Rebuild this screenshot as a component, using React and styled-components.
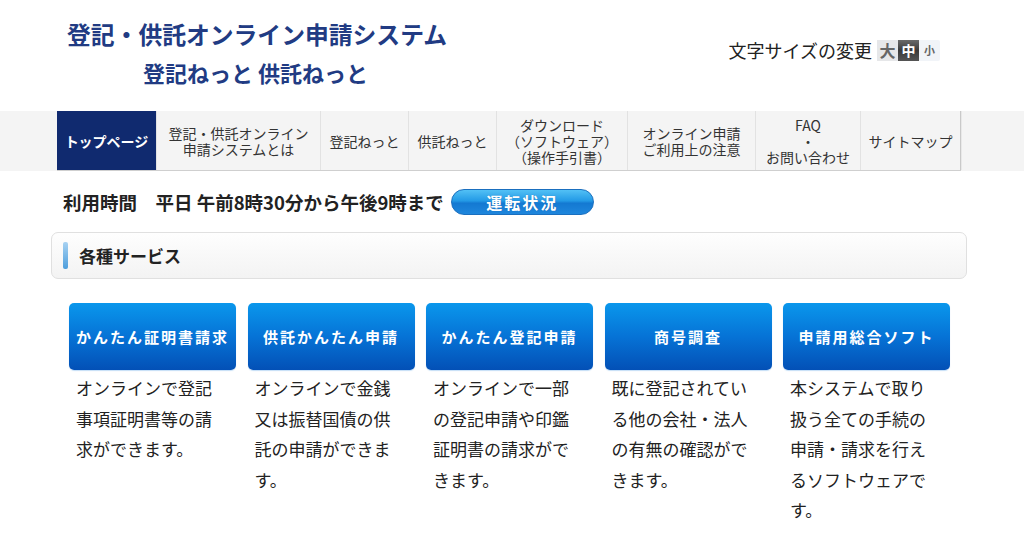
import React from "react";
import styled, { createGlobalStyle } from "styled-components";

const Global = createGlobalStyle`
  html, body { margin: 0; padding: 0; background: #fff; }
  body {
    font-family: "Noto Sans CJK JP", "Noto Sans", sans-serif;
    color: #222;
  }
  * { box-sizing: border-box; }
`;

const Page = styled.div`
  width: 1024px;
  min-height: 546px;
  overflow: hidden;
`;

const Header = styled.header`
  height: 111px;
  display: flex;
  justify-content: space-between;
  align-items: flex-start;
`;

const Brand = styled.div`
  padding-left: 67px;
  padding-top: 17px;
  color: #213b83;
  font-weight: 700;
`;

const Title = styled.div`
  font-size: 23.8px;
  line-height: 34px;
  white-space: nowrap;
`;

const Sub = styled.div`
  font-size: 22px;
  line-height: 30px;
  margin-top: 6px;
  padding-left: 76px;
  white-space: nowrap;
`;

const SizeBox = styled.div`
  display: flex;
  align-items: center;
  margin-top: 39px;
  margin-right: 84px;
  gap: 5px;
`;

const SizeLabel = styled.span`
  font-size: 18px;
  line-height: 22px;
  color: #222;
`;

const SizeButtons = styled.div`
  display: flex;
  background: #f1f4f8;
  border-radius: 2px;
`;

const SizeBtn = styled.span`
  width: 21px;
  height: 21px;
  display: flex;
  align-items: center;
  justify-content: center;
  font-weight: 700;
  font-size: ${(p) => p.$fs}px;
  color: ${(p) => (p.$active ? "#fff" : "#666")};
  background: ${(p) =>
    p.$active
      ? "linear-gradient(#6a6a6a, #3a3a3a 50%, #555)"
      : p.$tint
      ? "#e6e7e9"
      : "transparent"};
`;

const NavBar = styled.nav`
  height: 60px;
  background: #f4f4f4;
`;

const NavList = styled.ul`
  list-style: none;
  margin: 0 0 0 57px;
  padding: 0;
  display: flex;
  height: 60px;
  width: 904px;
  border-bottom: 1px solid #cfcfcf;
`;

const NavItem = styled.li`
  width: ${(p) => p.$w}px;
  height: 59px;
  display: flex;
  align-items: center;
  justify-content: center;
  text-align: center;
  font-size: 14px;
  line-height: 16px;
  color: ${(p) => (p.$active ? "#fff" : "#333")};
  font-weight: ${(p) => (p.$active ? 700 : 400)};
  background: ${(p) => (p.$active ? "#102a6f" : "transparent")};
  border-right: 1px solid ${(p) => (p.$last ? "#c9c9c9" : "#e2e2e2")};
  box-shadow: ${(p) => (p.$last ? "1px 0 0 #e8e8e8" : "none")};
  white-space: nowrap;
`;

const NavLine = styled.div`
  display: block;
`;

const Main = styled.main`
  padding: 18px 0 0 51px;
  width: 967px;
`;

const HoursRow = styled.div`
  display: flex;
  align-items: center;
  gap: 7px;
  padding-left: 12px;
  height: 26px;
`;

const HoursText = styled.span`
  font-size: 18.5px;
  font-weight: 700;
  color: #222;
  white-space: pre;
`;

const StatusBtn = styled.span`
  width: 143px;
  height: 26px;
  border-radius: 13px;
  background: linear-gradient(#52c0f5 0%, #239ae6 45%, #1479d2 55%, #1e86dc 100%);
  border: 1px solid #1a6fbf;
  color: #fff;
  font-weight: 700;
  font-size: 16px;
  letter-spacing: 2px;
  display: flex;
  align-items: center;
  justify-content: center;
  text-shadow: 0 0 1px rgba(0, 50, 120, 0.4);
`;

const SectionHead = styled.div`
  margin-top: 17px;
  height: 47px;
  border: 1px solid #e0e0e0;
  border-radius: 7px;
  background: linear-gradient(#fefefe, #f3f3f3);
  display: flex;
  align-items: center;
  padding-left: 11px;
  gap: 11px;
`;

const Bar = styled.span`
  width: 5px;
  height: 27px;
  border-radius: 2px;
  background: linear-gradient(#a8d2f2, #4d9edc);
`;

const SectionTitle = styled.span`
  font-size: 17px;
  font-weight: 700;
  color: #222;
`;

const Services = styled.div`
  display: grid;
  grid-template-columns: repeat(5, 167px);
  column-gap: 11.5px;
  padding: 24px 0 0 18px;
`;

const Service = styled.div`
  display: flex;
  flex-direction: column;
`;

const ServiceBtn = styled.div`
  height: 67px;
  border-radius: 5px;
  background: linear-gradient(#0a97ec 0%, #0673d6 50%, #0350b6 100%);
  box-shadow: 0 1px 1px rgba(90, 160, 230, 0.35);
  color: #fff;
  font-weight: 700;
  font-size: 15px;
  letter-spacing: 2px;
  display: flex;
  align-items: center;
  justify-content: center;
  white-space: nowrap;
`;

const Desc = styled.p`
  margin: 3px 0 0;
  padding: 0 12px 0 7px;
  font-size: 17px;
  line-height: 30.5px;
  color: #222;
`;

const navItems = [
  { w: 100, t: ["トップページ"], active: true },
  { w: 164, t: ["登記・供託オンライン", "申請システムとは"] },
  { w: 88, t: ["登記ねっと"] },
  { w: 88, t: ["供託ねっと"] },
  { w: 131, t: ["ダウンロード", "（ソフトウェア）", "（操作手引書）"] },
  { w: 128, t: ["オンライン申請", "ご利用上の注意"] },
  { w: 105, t: ["FAQ", "・", "お問い合わせ"] },
  { w: 100, t: ["サイトマップ"], last: true },
];

const services = [
  { b: "かんたん証明書請求", d: "オンラインで登記事項証明書等の請求ができます。" },
  { b: "供託かんたん申請", d: "オンラインで金銭又は振替国債の供託の申請ができます。" },
  { b: "かんたん登記申請", d: "オンラインで一部の登記申請や印鑑証明書の請求ができます。" },
  { b: "商号調査", d: "既に登記されている他の会社・法人の有無の確認ができます。" },
  { b: "申請用総合ソフト", d: "本システムで取り扱う全ての手続の申請・請求を行えるソフトウェアです。" },
];

export default function App() {
  return (
    <Page>
      <Global />
      <Header>
        <Brand>
          <Title>登記・供託オンライン申請システム</Title>
          <Sub>登記ねっと 供託ねっと</Sub>
        </Brand>
        <SizeBox>
          <SizeLabel>文字サイズの変更</SizeLabel>
          <SizeButtons>
            <SizeBtn $fs={16} $tint>大</SizeBtn>
            <SizeBtn $fs={14} $active>中</SizeBtn>
            <SizeBtn $fs={11}>小</SizeBtn>
          </SizeButtons>
        </SizeBox>
      </Header>
      <NavBar>
        <NavList>
          {navItems.map((n, i) => (
            <NavItem key={i} $w={n.w} $active={n.active} $last={n.last}>
              <div>
                {n.t.map((l, j) => (
                  <NavLine key={j}>{l}</NavLine>
                ))}
              </div>
            </NavItem>
          ))}
        </NavList>
      </NavBar>
      <Main>
        <HoursRow>
          <HoursText>利用時間　平日 午前8時30分から午後9時まで</HoursText>
          <StatusBtn>運転状況</StatusBtn>
        </HoursRow>
        <SectionHead>
          <Bar />
          <SectionTitle>各種サービス</SectionTitle>
        </SectionHead>
        <Services>
          {services.map((s, i) => (
            <Service key={i}>
              <ServiceBtn>{s.b}</ServiceBtn>
              <Desc>{s.d}</Desc>
            </Service>
          ))}
        </Services>
      </Main>
    </Page>
  );
}
